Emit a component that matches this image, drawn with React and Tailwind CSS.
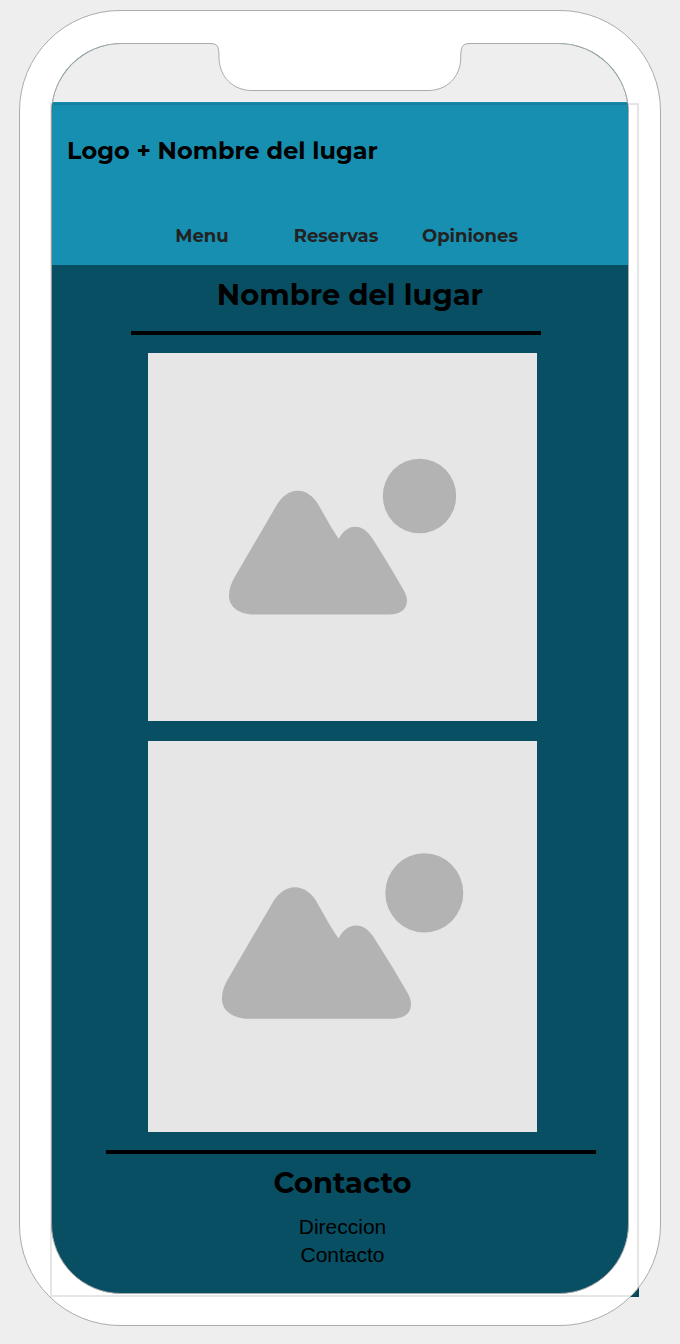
const links = [
  { label: 'Menu', href: '#menu' },
  { label: 'Reservas', href: '#reservas' },
  { label: 'Opiniones', href: '#opiniones' },
];

function ImagePlaceholder({ ratio, label }) {
  return (
    <div className={`ml-24 mr-[91px] bg-[#e6e6e6] ${ratio}`}>
      <svg
        role="img"
        aria-label={label}
        viewBox="0 0 389 368"
        preserveAspectRatio="xMidYMid slice"
        className="block h-full w-full fill-[#b3b3b3]"
      >
        <path d="M107 261.5H240.3C252 261.5 259 256.5 259 247.7C259 243 257 239 253.7 233.7L242 213.7Q233 199 224.3 185.3C219.500 178 214 173.700 207.3 173.700C200 173.700 195 178.500 190.7 185.700Q183 174.500 178.700 166.300L171.300 153.300C166 143.500 158.500 137.700 149.700 137.700C141 137.700 133.500 143.500 128 153.300L87 223.500C83 230.500 81 236 81 242.700C81 254 91 261.500 107 261.500Z" />
        <ellipse cx="271.500" cy="143" rx="36.700" ry="37.300" />
      </svg>
    </div>
  );
}

function Notch() {
  return (
    <svg
      aria-hidden="true"
      viewBox="0 0 272 50"
      className="absolute left-1/2 top-[31px] h-[50px] w-[272px] -translate-x-1/2"
    >
      <path
        d="M5 0H267V1.500C258 1.500 257.500 4 256.700 13V17C256 35 243 48.500 224 48.500H48C29 48.500 16 35 15 17V13C14.500 4 14 1.500 5 1.500Z"
        fill="white"
      />
      <path
        d="M0 1.500H5C14 1.500 14.500 4 15 13V17C16 35 29 48.500 48 48.500H224C243 48.500 256 35 256.700 17V13C257.500 4 258 1.500 267 1.500H272"
        fill="none"
        stroke="#ababab"
      />
    </svg>
  );
}

export default function App() {
  return (
    <div className="min-h-screen bg-[#eeeeee] px-[19px] pb-[18px] pt-[10px] font-['Montserrat','Inter',sans-serif] text-black">
      <div className="relative">
        <div className="absolute bottom-[29px] right-[22px] h-4 w-4 bg-[#084f63]" />
        <div className="relative rounded-[101px] border border-[#ababab] bg-white px-[31px] pb-[31px] pt-8">
          <div className="overflow-hidden rounded-[70px] border border-[#ababab] bg-[#084f63]">
            <div className="h-[58px] bg-[#eeeeee]" />
            <header className="bg-[#178fb1] pb-[17px] pt-[33px]">
              <p className="pl-[15px] text-2xl font-bold leading-8">Logo + Nombre del lugar</p>
              <nav aria-label="Principal" className="ml-[83px] mr-[91px] mt-[57px] grid grid-cols-3 text-center text-lg font-bold leading-6 text-[#222222]">
                {links.map((link) => (
                  <a key={link.label} href={link.href}>{link.label}</a>
                ))}
              </nav>
            </header>
            <main>
              <h1 className="pl-5 pt-3 text-center text-[29px] font-bold leading-9">Nombre del lugar</h1>
              <hr className="ml-[79px] mr-[87px] mt-[18px] border-t-4 border-black" />
              <div className="mt-[18px] flex flex-col gap-5">
                <ImagePlaceholder ratio="aspect-[389/368]" label="Imagen del lugar 1" />
                <ImagePlaceholder ratio="aspect-[389/391]" label="Imagen del lugar 2" />
              </div>
            </main>
            <footer className="pb-6 text-center">
              <hr className="ml-[54px] mr-8 mt-[18px] border-t-4 border-black" />
              <div className="pl-[5px]">
                <h2 className="mt-[11px] text-[29px] font-bold leading-9">Contacto</h2>
                <address className="mt-3 font-['Liberation_Sans',sans-serif] text-[21px] not-italic leading-7">
                  <p>Direccion</p>
                  <p>Contacto</p>
                </address>
              </div>
            </footer>
          </div>
          <Notch />
        </div>
        <div className="pointer-events-none absolute bottom-[29px] left-[31px] right-[22px] top-[93px] border-2 border-black/10" />
      </div>
    </div>
  );
}
